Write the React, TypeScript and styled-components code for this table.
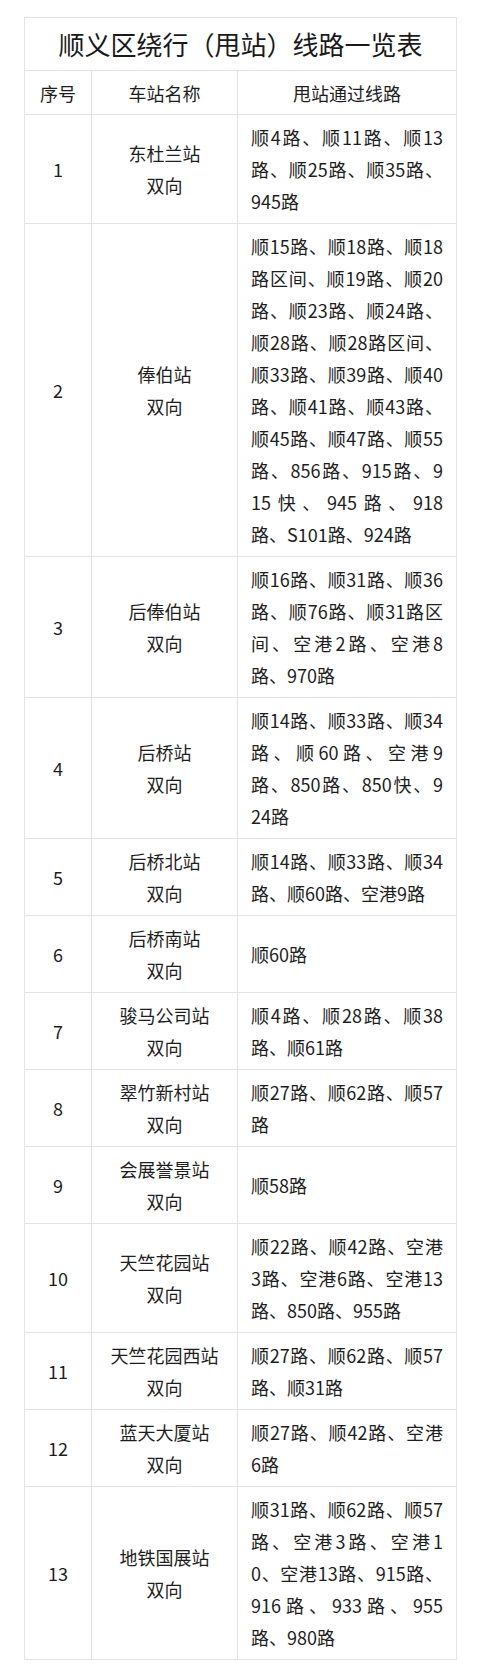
import React from "react";
import styled, { createGlobalStyle } from "styled-components";

const Global = createGlobalStyle`
  html, body { margin: 0; padding: 0; background: #ffffff; }
  body {
    font-family: "Noto Sans CJK SC", "Noto Sans", sans-serif;
    color: #1e1e1e;
    -webkit-font-smoothing: antialiased;
  }
`;

const Page = styled.div`
  width: 480px;
  box-sizing: border-box;
  padding: 17px 24px 16px 24px;
`;

const Table = styled.table`
  width: 432px;
  border-collapse: collapse;
  table-layout: fixed;
`;

const TitleCell = styled.th`
  border: 1px solid #e4e4e4;
  padding: 6px 0 6px;
  font-size: 26px;
  font-weight: 400;
  line-height: 40px;
  text-align: center;
  color: #1a1a1a;
`;

const HeadCell = styled.th`
  border: 1px solid #e4e4e4;
  padding: 6px 0 5px;
  font-size: 18px;
  font-weight: 400;
  line-height: 32px;
  text-align: center;
  color: #1e1e1e;
`;

const Cell = styled.td<{ $align?: "center" | "left" }>`
  border: 1px solid #e4e4e4;
  padding: ${(p) => (p.$align === "left" ? "6px 13px 6px 13px" : "6px 0")};
  font-size: 18px;
  line-height: 32px;
  text-align: ${(p) => p.$align ?? "center"};
  vertical-align: middle;
  color: #1e1e1e;
`;

const Line = styled.span<{ $justify: boolean }>`
  display: block;
  white-space: nowrap;
  text-align: ${(p) => (p.$justify ? "justify" : "left")};
  text-align-last: ${(p) => (p.$justify ? "justify" : "left")};
`;

const NameLine = styled.span`
  display: block;
  white-space: nowrap;
`;

type Row = { no: string; name: string; lines: string[] };

const rows: Row[] = [
  { no: "1", name: "东杜兰站", lines: ["顺4路、顺11路、顺13", "路、顺25路、顺35路、", "945路"] },
  {
    no: "2",
    name: "俸伯站",
    lines: [
      "顺15路、顺18路、顺18",
      "路区间、顺19路、顺20",
      "路、顺23路、顺24路、",
      "顺28路、顺28路区间、",
      "顺33路、顺39路、顺40",
      "路、顺41路、顺43路、",
      "顺45路、顺47路、顺55",
      "路、856路、915路、9",
      "15快、945路、918",
      "路、S101路、924路",
    ],
  },
  { no: "3", name: "后俸伯站", lines: ["顺16路、顺31路、顺36", "路、顺76路、顺31路区", "间、空港2路、空港8", "路、970路"] },
  { no: "4", name: "后桥站", lines: ["顺14路、顺33路、顺34", "路、顺60路、空港9", "路、850路、850快、9", "24路"] },
  { no: "5", name: "后桥北站", lines: ["顺14路、顺33路、顺34", "路、顺60路、空港9路"] },
  { no: "6", name: "后桥南站", lines: ["顺60路"] },
  { no: "7", name: "骏马公司站", lines: ["顺4路、顺28路、顺38", "路、顺61路"] },
  { no: "8", name: "翠竹新村站", lines: ["顺27路、顺62路、顺57", "路"] },
  { no: "9", name: "会展誉景站", lines: ["顺58路"] },
  { no: "10", name: "天竺花园站", lines: ["顺22路、顺42路、空港", "3路、空港6路、空港13", "路、850路、955路"] },
  { no: "11", name: "天竺花园西站", lines: ["顺27路、顺62路、顺57", "路、顺31路"] },
  { no: "12", name: "蓝天大厦站", lines: ["顺27路、顺42路、空港", "6路"] },
  {
    no: "13",
    name: "地铁国展站",
    lines: ["顺31路、顺62路、顺57", "路、空港3路、空港1", "0、空港13路、915路、", "916路、933路、955", "路、980路"],
  },
];

export default function App() {
  return (
    <Page>
      <Global />
      <Table>
        <colgroup>
          <col style={{ width: 67 }} />
          <col style={{ width: 146 }} />
          <col style={{ width: 219 }} />
        </colgroup>
        <thead>
          <tr>
            <TitleCell colSpan={3}>顺义区绕行（甩站）线路一览表</TitleCell>
          </tr>
          <tr>
            <HeadCell>序号</HeadCell>
            <HeadCell>车站名称</HeadCell>
            <HeadCell>甩站通过线路</HeadCell>
          </tr>
        </thead>
        <tbody>
          {rows.map((r) => (
            <tr key={r.no}>
              <Cell>{r.no}</Cell>
              <Cell>
                <NameLine>{r.name}</NameLine>
                <NameLine>双向</NameLine>
              </Cell>
              <Cell $align="left">
                {r.lines.map((l, i) => (
                  <Line key={i} $justify={i < r.lines.length - 1}>
                    {l}
                  </Line>
                ))}
              </Cell>
            </tr>
          ))}
        </tbody>
      </Table>
    </Page>
  );
}
